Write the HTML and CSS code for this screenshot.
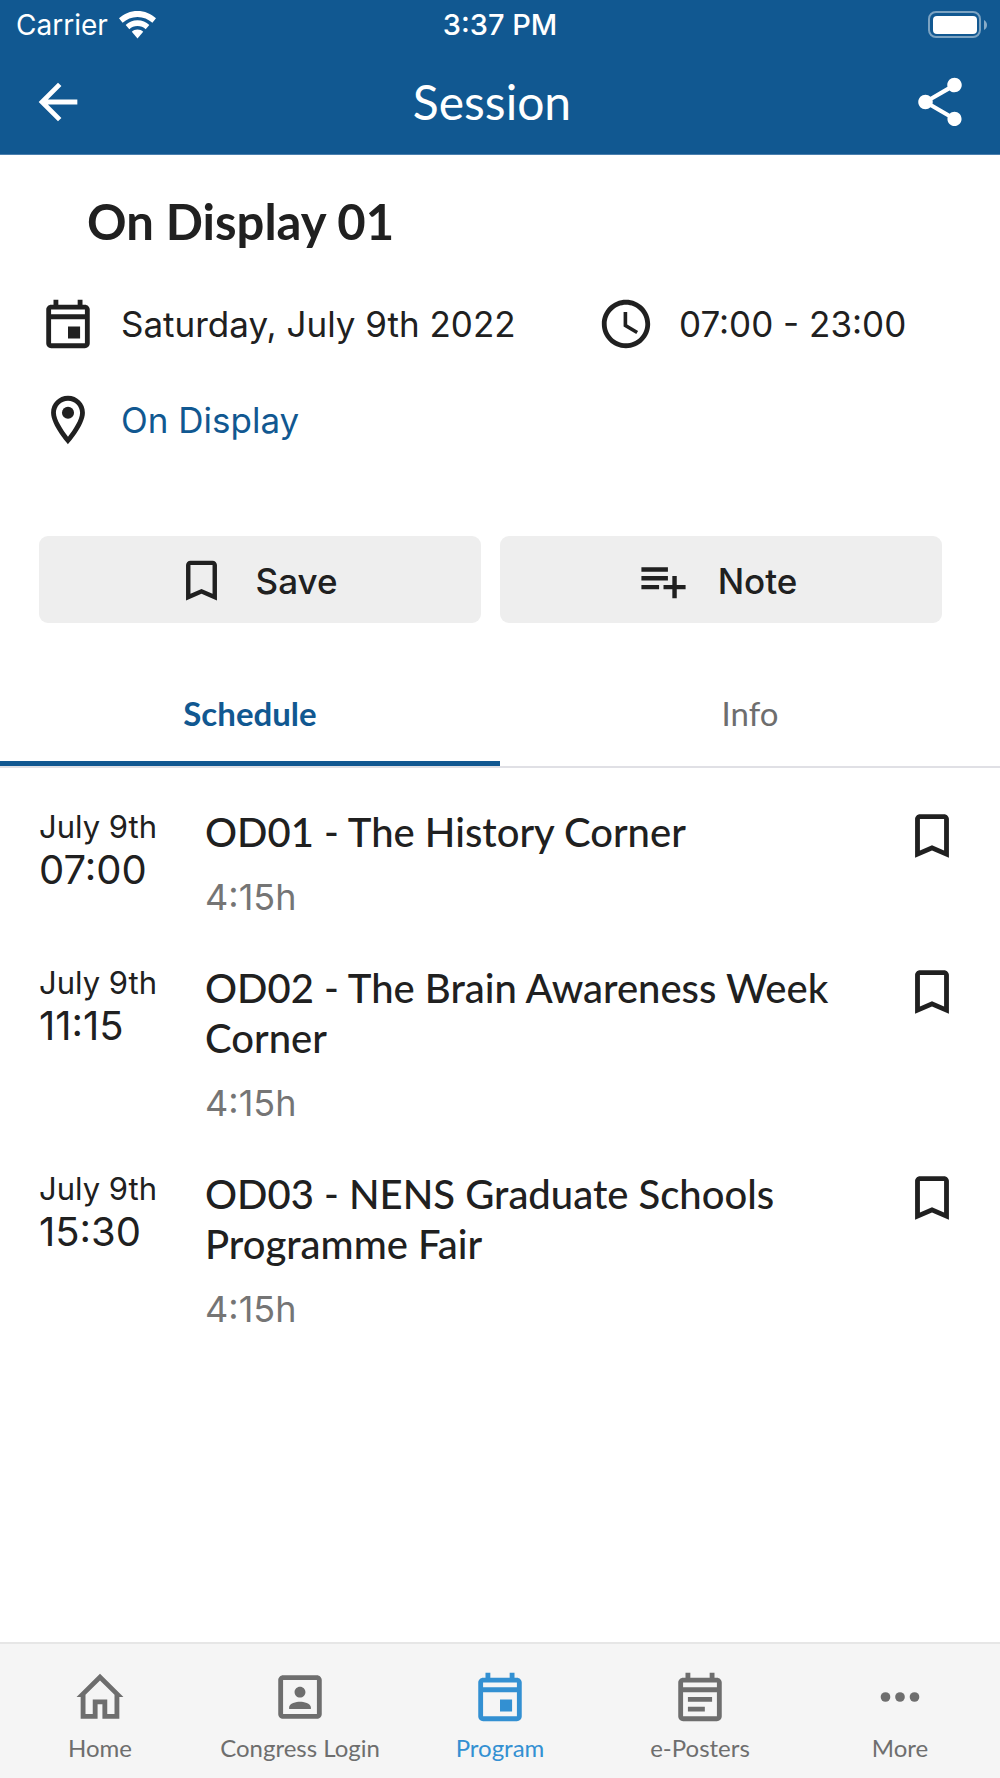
FILE: index.html
```html
<!DOCTYPE html>
<html lang="en">
<head>
<meta charset="utf-8">
<meta name="viewport" content="width=device-width, initial-scale=1">
<title>Session</title>
<link rel="stylesheet" href="styles.css">
</head>
<body>
<svg hidden>
  <symbol id="i-event" viewBox="0 0 24 24"><path d="M19 4h-1V2h-2v2H8V2H6v2H5c-1.1 0-2 .9-2 2v14c0 1.1.9 2 2 2h14c1.1 0 2-.9 2-2V6c0-1.1-.9-2-2-2zm0 16H5V10h14v10zm0-12H5V6h14v2zm-7 5h5v5h-5z"/></symbol>
  <symbol id="i-bookmark" viewBox="0 0 24 24"><path d="M17 3H7c-1.1 0-2 .9-2 2v16l7-3 7 3V5c0-1.1-.9-2-2-2zm0 15l-5-2.180L7 18V5h10v13z"/></symbol>
</svg>
<header class="header">
  <div class="status">
    <div class="carrier"><span>Carrier</span>
      <svg class="wifi" viewBox="0 0 37 28"><path d="M18.500 0C11.400 0 5 2.700 0 7.300L3.600 11.800C7.600 8.100 12.700 5.900 18.500 5.900S29.400 8.100 33.400 11.800L37 7.300C32 2.700 25.600 0 18.500 0z"/><path d="M18.500 9.200C13.900 9.200 9.800 11 6.700 13.900L10.300 18.200C12.500 16.200 15.300 15 18.500 15S24.500 16.200 26.700 18.200L30.300 13.900C27.200 11 23.100 9.200 18.500 9.200z"/><path d="M18.500 18.500C16.300 18.500 14.300 19.300 12.800 20.700L18.500 27.500L24.200 20.700C22.700 19.300 20.700 18.500 18.500 18.500z"/></svg>
    </div>
    <div class="clock">3:37 PM</div>
    <svg class="battery" viewBox="0 0 60 28"><rect x="1" y="1" width="51" height="25" rx="7" fill="none" stroke="#fff" stroke-opacity=".45" stroke-width="2"/><rect x="5" y="5" width="44" height="18" rx="4"/><path d="M56 9c2 1 3 3 3 5s-1 4-3 5z" fill-opacity=".5"/></svg>
  </div>
  <div class="toolbar">
    <button class="icon-button" aria-label="Back"><svg class="icon" viewBox="0 0 24 24"><path d="M20 11H7.830l5.590-5.590L12 4l-8 8 8 8 1.410-1.410L7.830 13H20v-2z"/></svg></button>
    <h1 class="page-title">Session</h1>
    <button class="icon-button" aria-label="Share"><svg class="icon" viewBox="0 0 24 24"><path d="M18 16.080c-.76 0-1.440.3-1.960.77L8.910 12.700c.05-.23.09-.46.09-.7s-.04-.47-.09-.7l7.050-4.110c.54.5 1.250.81 2.040.81 1.660 0 3-1.340 3-3s-1.340-3-3-3-3 1.340-3 3c0 .24.04.47.09.7L8.040 9.810C7.500 9.310 6.790 9 6 9c-1.660 0-3 1.340-3 3s1.340 3 3 3c.79 0 1.500-.31 2.040-.81l7.120 4.160c-.05.21-.08.43-.08.65 0 1.610 1.310 2.920 2.920 2.920s2.920-1.310 2.920-2.920-1.310-2.920-2.920-2.920z"/></svg></button>
  </div>
</header>
<main class="main">
  <section class="session">
    <h2 class="session-title">On Display 01</h2>
    <div class="facts">
      <div class="fact"><svg class="icon"><use href="#i-event"/></svg><span>Saturday, July 9th 2022</span></div>
      <div class="fact"><svg class="icon" viewBox="0 0 24 24"><path d="M11.990 2C6.470 2 2 6.480 2 12s4.470 10 9.990 10C17.520 22 22 17.520 22 12S17.520 2 11.990 2zM12 20c-4.420 0-8-3.580-8-8s3.580-8 8-8 8 3.580 8 8-3.580 8-8 8zm.5-13H11v6l5.250 3.150.75-1.230-4.500-2.670z"/></svg><span>07:00 - 23:00</span></div>
      <div class="fact"><svg class="icon" viewBox="0 0 24 24"><path d="M12 2C8.130 2 5 5.130 5 9c0 5.250 7 13 7 13s7-7.750 7-13c0-3.870-3.130-7-7-7zM7 9c0-2.760 2.240-5 5-5s5 2.240 5 5c0 2.880-2.880 7.190-5 9.880C9.920 16.210 7 11.850 7 9z"/><circle cx="12" cy="9" r="2.500"/></svg><a class="place" href="#">On Display</a></div>
    </div>
    <div class="actions">
      <button class="action"><svg class="icon-small"><use href="#i-bookmark"/></svg>Save</button>
      <button class="action"><svg class="icon-small" viewBox="0 0 24 24"><path d="M14 10H2v2h12v-2zm0-4H2v2h12V6zm4 8v-4h-2v4h-4v2h4v4h2v-4h4v-2h-4zM2 16h8v-2H2v2z"/></svg>Note</button>
    </div>
  </section>
  <div class="tabs" role="tablist">
    <button class="tab tab-active" role="tab" aria-selected="true">Schedule</button>
    <button class="tab" role="tab" aria-selected="false">Info</button>
  </div>
  <ul class="schedule">
    <li class="talk">
      <div class="when"><div class="date">July 9th</div><div class="time">07:00</div></div>
      <div class="what"><h3 class="talk-title">OD01 - The History Corner</h3><div class="duration">4:15h</div></div>
      <button class="icon-button" aria-label="Save OD01"><svg class="icon"><use href="#i-bookmark"/></svg></button>
    </li>
    <li class="talk">
      <div class="when"><div class="date">July 9th</div><div class="time">11:15</div></div>
      <div class="what"><h3 class="talk-title">OD02 - The Brain Awareness Week Corner</h3><div class="duration">4:15h</div></div>
      <button class="icon-button" aria-label="Save OD02"><svg class="icon"><use href="#i-bookmark"/></svg></button>
    </li>
    <li class="talk">
      <div class="when"><div class="date">July 9th</div><div class="time">15:30</div></div>
      <div class="what"><h3 class="talk-title">OD03 - NENS Graduate Schools Programme Fair</h3><div class="duration">4:15h</div></div>
      <button class="icon-button" aria-label="Save OD03"><svg class="icon"><use href="#i-bookmark"/></svg></button>
    </li>
  </ul>
</main>
<nav class="bottom-nav">
  <a class="nav-item" href="#"><svg class="icon" viewBox="0 0 24 24"><path d="M12 2.400L2.300 12H4v9h7v-6h2v6h7v-9h1.700L12 2.400zM12 5.200l6 5.900V19h-3v-6H9v6H6v-7.900z"/></svg>Home</a>
  <a class="nav-item" href="#"><svg class="icon" viewBox="0 0 24 24"><path d="M12 12.250c1.240 0 2.250-1.010 2.250-2.250S13.240 7.750 12 7.750 9.750 8.760 9.750 10s1.010 2.250 2.250 2.250zm4.500 4c0-1.500-3-2.250-4.500-2.250s-4.500.75-4.500 2.250V17h9v-.75zM19 3H5c-1.100 0-2 .9-2 2v14c0 1.100.9 2 2 2h14c1.100 0 2-.9 2-2V5c0-1.100-.9-2-2-2zm0 16H5V5h14v14z"/></svg>Congress Login</a>
  <a class="nav-item nav-active" href="#" aria-current="page"><svg class="icon"><use href="#i-event"/></svg>Program</a>
  <a class="nav-item" href="#"><svg class="icon" viewBox="0 0 24 24"><path d="M19 4h-1V2h-2v2H8V2H6v2H5c-1.100 0-2 .9-2 2v14c0 1.100.9 2 2 2h14c1.100 0 2-.9 2-2V6c0-1.100-.9-2-2-2zm0 16H5V10h14v10zm0-12H5V6h14v2zM7 12h10v2H7zm0 4h7v2H7z"/></svg>e-Posters</a>
  <a class="nav-item" href="#"><svg class="icon" viewBox="0 0 24 24"><circle cx="6" cy="12" r="2"/><circle cx="12" cy="12" r="2"/><circle cx="18" cy="12" r="2"/></svg>More</a>
</nav>
</body>
</html>
```
FILE: styles.css
```css
:root {
  --blue: #115891;
  --ink: #202020;
  --muted: #6e6e6e;
  --ui: Inter, "Liberation Sans", sans-serif;
  --display: Lato, "Liberation Sans", sans-serif;
}

* {
  box-sizing: border-box;
}

body {
  margin: 0;
  min-height: 100vh;
  display: flex;
  flex-direction: column;
  background: #fff;
  color: var(--ink);
  font-family: var(--ui);
}

h1, h2, h3, ul {
  margin: 0;
  padding: 0;
}

button {
  margin: 0;
  padding: 0;
  border: 0;
  background: none;
  color: inherit;
  font: inherit;
}

svg {
  display: block;
  flex: none;
  fill: currentColor;
}

svg[hidden] {
  display: none;
}

.icon {
  width: 58px;
  height: 58px;
}

.icon-small {
  width: 53px;
  height: 53px;
}

.header {
  border-bottom: 1px solid #4a7fae;
  background: var(--blue);
  color: #fff;
}

.status {
  display: grid;
  grid-template-columns: 1fr auto 1fr;
  align-items: center;
  height: 50px;
  padding: 0 12px;
  font-size: 28px;
  line-height: 50px;
}

.carrier {
  display: flex;
  align-items: center;
  gap: 11px;
  padding-left: 4px;
}

.wifi {
  width: 37px;
  height: 28px;
}

.clock {
  font-size: 29px;
  font-weight: 500;
}

.battery {
  width: 60px;
  height: 28px;
  justify-self: end;
}

.toolbar {
  display: flex;
  align-items: center;
  height: 104px;
  padding: 0 31px 0 29px;
}

.page-title {
  flex: 1;
  padding-right: 14px;
  text-align: center;
  font: 400 48px/58px var(--display);
}

.main {
  flex: 1;
}

.session {
  padding: 36px 39px 0;
}

.session-title {
  padding-left: 48px;
  font: 700 49px/60px var(--display);
}

.facts {
  display: grid;
  grid-template-columns: 558px 1fr;
  row-gap: 38px;
  padding-top: 44px;
  font-size: 35px;
}

.fact {
  display: flex;
  align-items: center;
  gap: 24px;
}

.place {
  color: var(--blue);
  text-decoration: none;
}

.actions {
  display: grid;
  grid-template-columns: 1fr 1fr;
  gap: 19px;
  padding: 87px 19px 0 0;
}

.action {
  display: flex;
  align-items: center;
  justify-content: center;
  gap: 28px;
  height: 87px;
  padding: 2px 8px 0 0;
  border-radius: 9px;
  background: #eee;
  font-size: 35px;
  font-weight: 500;
  line-height: 40px;
}

.tabs {
  display: grid;
  grid-template-columns: 1fr 1fr;
  margin-top: 47px;
  border-bottom: 2px solid #e0e0e5;
}

.tab {
  height: 96px;
  padding-bottom: 5px;
  border-bottom: 5px solid transparent;
  color: var(--muted);
  font: 400 33px/40px var(--display);
}

.tab-active {
  border-color: var(--blue);
  color: var(--blue);
  font-weight: 700;
}

.schedule {
  padding: 39px 39px 0;
  list-style: none;
}

.talk {
  display: flex;
  align-items: flex-start;
  margin-bottom: 42px;
}

.when {
  width: 166px;
}

.date {
  font-size: 31px;
  line-height: 40px;
}

.time {
  font-size: 40px;
  line-height: 46px;
}

.what {
  flex: 1;
}

.talk-title {
  padding-right: 40px;
  font: 500 40px/50px var(--display);
}

.duration {
  padding-top: 16px;
  color: #757575;
  font-size: 36px;
  line-height: 48px;
}

.bottom-nav {
  display: grid;
  grid-template-columns: repeat(5, 1fr);
  border-top: 2px solid #e6e6e6;
  background: #f5f5f5;
}

.nav-item {
  display: flex;
  flex-direction: column;
  align-items: center;
  gap: 6px;
  padding: 24px 0 14px;
  color: var(--muted);
  font: 400 24px/32px var(--display);
  text-decoration: none;
}

.nav-active {
  color: #3390d2;
}
```
